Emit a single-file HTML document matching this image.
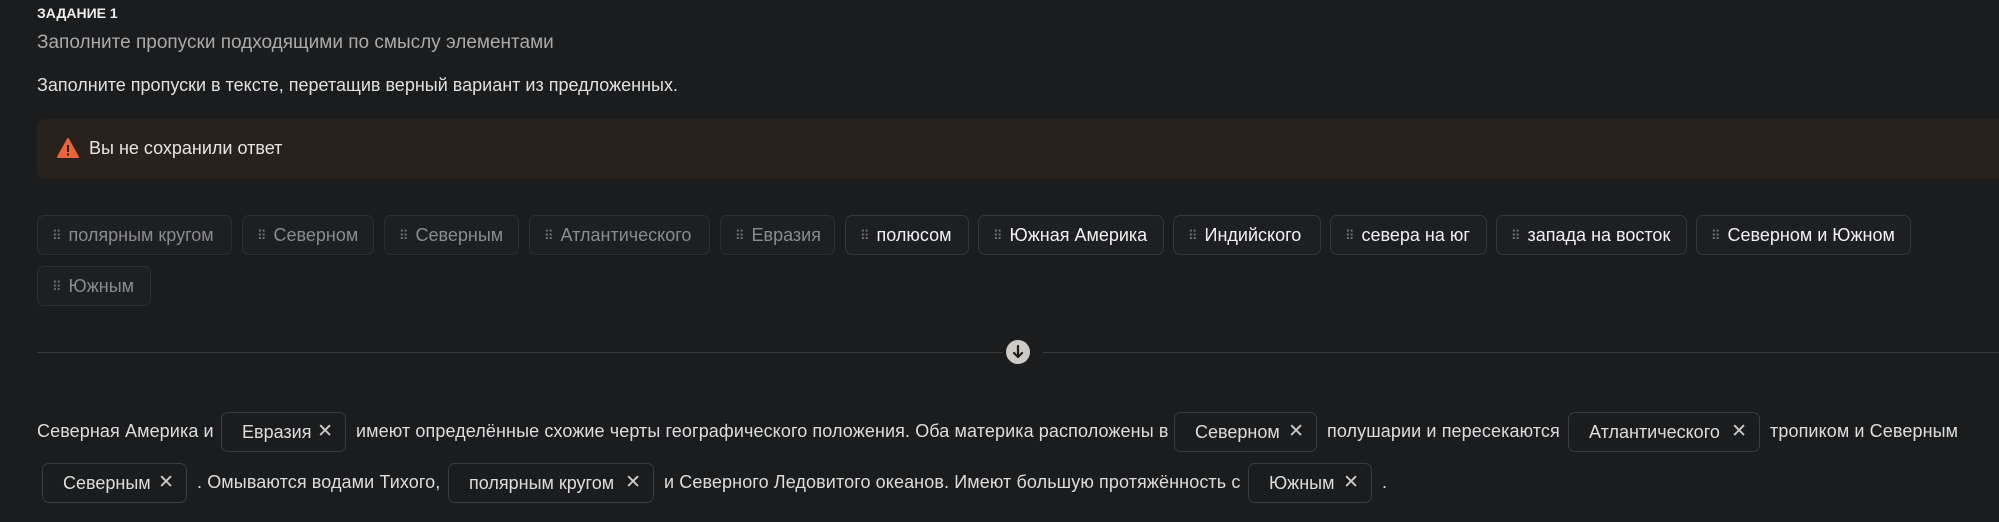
<!DOCTYPE html>
<html><head><meta charset="utf-8"><style>
body{margin:0;width:1999px;height:522px;background:#1b1c1e;font-family:"Liberation Sans",sans-serif;color:#ddd;overflow:hidden;position:relative}
.a{position:absolute;white-space:nowrap}
.chip{position:absolute;top:0;height:40px;border:1px solid #35373a;border-radius:7px;background:#1e1f22;box-sizing:border-box;font-size:18px;line-height:38px;padding-left:14px;color:#f2f2f2;white-space:nowrap;font-weight:500}
.chip.d{color:#8a8b8d;border-color:#2c2e31}
.chip .h{display:inline-block;color:#777;margin-right:8px;font-size:13px;letter-spacing:-1px;vertical-align:1px}
.row{position:absolute;left:0;width:1999px}
.t{position:absolute;font-size:18px;color:#ddd;white-space:nowrap;line-height:40px;letter-spacing:0.1px}
.c{position:absolute;height:40px;border:1px solid #3a3c40;border-radius:7px;box-sizing:border-box;font-size:18px;line-height:38px;padding:0 0 0 20px;color:#ddd;white-space:nowrap}
.c span{position:absolute;right:12px;top:0;font-size:19px;color:#ccc}
</style></head><body>
<div class="a" style="left:37px;top:5px;font-size:14px;font-weight:bold;color:#eee">ЗАДАНИЕ 1</div>
<div class="a" style="left:37px;top:32px;font-size:19px;color:#aaa">Заполните пропуски подходящими по смыслу элементами</div>
<div class="a" style="left:37px;top:75px;font-size:18px;color:#e0e0e0">Заполните пропуски в тексте, перетащив верный вариант из предложенных.</div>
<div class="a" style="left:37px;top:119px;width:1962px;height:60px;background:#29211c;border-radius:8px 0 0 8px"></div>
<svg class="a" style="left:57px;top:138px" width="22" height="20" viewBox="0 0 22 20"><path d="M11 1 L21 19 L1 19 Z" fill="#e8643a" stroke="#e8643a" stroke-width="2" stroke-linejoin="round"/><rect x="10" y="7" width="2" height="7" fill="#29211c"/><rect x="10" y="15.5" width="2" height="2" fill="#29211c"/></svg>
<div class="a" style="left:89px;top:138px;font-size:18px;color:#e6e6e6">Вы не сохранили ответ</div>

<div class="row" style="top:215px">
<div class="chip d" style="left:37px;width:195px"><span class="h">⠿</span>полярным кругом</div>
<div class="chip d" style="left:242px;width:132px"><span class="h">⠿</span>Северном</div>
<div class="chip d" style="left:384px;width:135px"><span class="h">⠿</span>Северным</div>
<div class="chip d" style="left:529px;width:181px"><span class="h">⠿</span>Атлантического</div>
<div class="chip d" style="left:720px;width:115px"><span class="h">⠿</span>Евразия</div>
<div class="chip" style="left:845px;width:124px"><span class="h">⠿</span>полюсом</div>
<div class="chip" style="left:978px;width:186px"><span class="h">⠿</span>Южная Америка</div>
<div class="chip" style="left:1173px;width:148px"><span class="h">⠿</span>Индийского</div>
<div class="chip" style="left:1330px;width:157px"><span class="h">⠿</span>севера на юг</div>
<div class="chip" style="left:1496px;width:191px"><span class="h">⠿</span>запада на восток</div>
<div class="chip" style="left:1696px;width:215px"><span class="h">⠿</span>Северном и Южном</div>
</div>
<div class="row" style="top:266px">
<div class="chip d" style="left:37px;width:114px"><span class="h">⠿</span>Южным</div>
</div>

<div class="a" style="left:37px;top:352px;width:966px;height:1px;background:#3a3c3f"></div>
<div class="a" style="left:1043px;top:352px;width:956px;height:1px;background:#3a3c3f"></div>
<svg class="a" style="left:1005px;top:339px" width="26" height="26" viewBox="0 0 26 26"><circle cx="13" cy="13" r="12" fill="#cfcac3"/><path d="M13 7 V18 M9 14 L13 18 L17 14" stroke="#1b1c1e" stroke-width="2.2" fill="none" stroke-linecap="round" stroke-linejoin="round"/></svg>

<div class="t" style="left:37px;top:411px">Северная Америка и</div>
<div class="c" style="left:221px;top:412px;width:125px">Евразия<span>✕</span></div>
<div class="t" style="left:356px;top:411px">имеют определённые схожие черты географического положения. Оба материка расположены в</div>
<div class="c" style="left:1174px;top:412px;width:143px">Северном<span>✕</span></div>
<div class="t" style="left:1327px;top:411px">полушарии и пересекаются</div>
<div class="c" style="left:1568px;top:412px;width:192px">Атлантического<span>✕</span></div>
<div class="t" style="left:1770px;top:411px">тропиком и Северным</div>

<div class="c" style="left:42px;top:463px;width:145px">Северным<span>✕</span></div>
<div class="t" style="left:197px;top:462px">. Омываются водами Тихого,</div>
<div class="c" style="left:448px;top:463px;width:206px">полярным кругом<span>✕</span></div>
<div class="t" style="left:664px;top:462px">и Северного Ледовитого океанов. Имеют большую протяжённость с</div>
<div class="c" style="left:1248px;top:463px;width:124px">Южным<span>✕</span></div>
<div class="t" style="left:1382px;top:462px">.</div>
</body></html>
